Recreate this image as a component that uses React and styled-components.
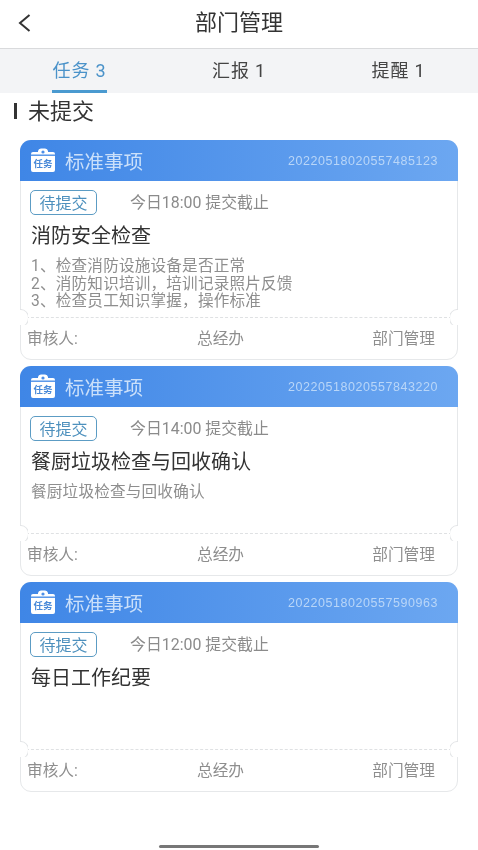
import styled, { createGlobalStyle } from 'styled-components';

const GlobalStyle = createGlobalStyle`
    html, body {
        margin: 0;
        padding: 0;
        background: #fff;
    }
    * {
        box-sizing: border-box;
    }
`;

const Page = styled.main`
    width: 478px;
    height: 850px;
    overflow: hidden;
    position: relative;
    font-family: Roboto, 'Noto Sans CJK SC', sans-serif;
    color: #2e2e2e;
    background: #fff;
    filter: blur(0.5px);
`;

const NavBar = styled.header`
    height: 49px;
    display: flex;
    align-items: center;
    justify-content: center;
    position: relative;
    border-bottom: 1px solid #d9dadc;
`;

const BackButton = styled.button`
    position: absolute;
    left: 14px;
    top: 10px;
    width: 18px;
    height: 26px;
    padding: 0;
    border: none;
    background: none;
    color: #333;
`;

const NavTitle = styled.h1`
    margin: 0 0 3px;
    font-size: 22px;
    font-weight: 400;
    line-height: 44px;
    color: #333;
`;

const Tabs = styled.nav`
    height: 44px;
    display: grid;
    grid-template-columns: 159px 160px 159px;
    background: #f3f4f6;
`;

const Tab = styled.div`
    position: relative;
    text-align: center;
    font-size: 18px;
    line-height: 44px;
    letter-spacing: 0.8px;
    color: ${props => (props.$active ? '#4a92c9' : '#444')};

    ${props => props.$active && `
        &::after {
            content: '';
            position: absolute;
            left: 52px;
            bottom: 0;
            width: 55px;
            height: 3px;
            background: #4a9ad0;
        }
    `}
`;

const SectionTitle = styled.h2`
    height: 40px;
    margin: 0 0 7px;
    padding: 0 0 8px 14px;
    display: flex;
    align-items: center;
    gap: 11px;
    font-size: 22px;
    font-weight: 400;
    color: #333;

    &::before {
        content: '';
        width: 3px;
        height: 16px;
        margin-top: 3px;
        background: #333;
    }
`;

const CardList = styled.section`
    display: flex;
    flex-direction: column;
    gap: 6px;
    padding: 0 20px;
`;

const Card = styled.article`
    height: ${props => props.$height}px;
    display: flex;
    flex-direction: column;
    position: relative;
    border: 1px solid #e6e8ea;
    border-radius: 11px;
    background: #fff;
`;

const CardHead = styled.div`
    height: 41px;
    margin: -1px -1px 0;
    padding: 0 20px 0 10px;
    display: flex;
    align-items: center;
    border-radius: 11px 11px 0 0;
    background: linear-gradient(90deg, #3f86e6, #6ca7f1);
`;

const HeadTitle = styled.span`
    margin-left: 9px;
    font-size: 19.5px;
    color: #cbe0fa;
`;

const HeadNumber = styled.span`
    margin-left: auto;
    font-family: 'Liberation Sans', sans-serif;
    font-size: 12.5px;
    letter-spacing: 0.55px;
    color: #b9d6f8;
`;

const CardBody = styled.div`
    flex: 1;
    padding: 9px 10px 0 9px;
`;

const StatusRow = styled.div`
    display: flex;
    align-items: center;
    height: 25px;
`;

const StatusBadge = styled.span`
    width: 67px;
    height: 25px;
    padding-bottom: 2px;
    display: flex;
    align-items: center;
    justify-content: center;
    border: 1.5px solid #5c9cc4;
    border-radius: 5px;
    font-size: 16px;
    color: #4d90bd;
`;

const Deadline = styled.span`
    margin: 0 0 3px 33px;
    font-size: 15.9px;
    color: #8b8b8b;
`;

const TaskTitle = styled.h3`
    margin: 8px 0 0 1px;
    font-size: 20px;
    font-weight: 400;
    line-height: 26px;
    color: #333;
`;

const TaskDesc = styled.p`
    margin: 9px 0 0 1px;
    font-size: 15.6px;
    line-height: 17.5px;
    letter-spacing: 0.2px;
    color: #8e8e8e;
    white-space: pre-line;
`;

const CardFoot = styled.div`
    height: 42px;
    padding: 0 22px 2px 6px;
    display: grid;
    grid-template-columns: 170px 1fr auto;
    align-items: center;
    position: relative;
    border-top: 1px dashed #dfe1e3;
    font-size: 15.7px;
    color: #8e8e8e;
`;

const Notch = styled.i`
    position: absolute;
    top: -9px;
    ${props => props.$side}: -1px;
    width: 8px;
    height: 16px;
    overflow: hidden;
    background: #fff;

    &::before {
        content: '';
        position: absolute;
        top: 0;
        ${props => props.$side}: -7px;
        width: 14px;
        height: 16px;
        border-radius: 50%;
        border: 1px solid #e3e5e7;
    }
`;

const HomeBar = styled.div`
    position: absolute;
    left: 159px;
    bottom: 2px;
    width: 160px;
    height: 3px;
    border-radius: 2px;
    background: #777;
`;

const tasks = [
    {
        number: '20220518020557485123',
        time: '今日18:00 提交截止',
        title: '消防安全检查',
        desc: '1、检查消防设施设备是否正常\n2、消防知识培训，培训记录照片反馈\n3、检查员工知识掌握，操作标准',
        height: 220,
    },
    {
        number: '20220518020557843220',
        time: '今日14:00 提交截止',
        title: '餐厨垃圾检查与回收确认',
        desc: '餐厨垃圾检查与回收确认',
        height: 210,
    },
    {
        number: '20220518020557590963',
        time: '今日12:00 提交截止',
        title: '每日工作纪要',
        desc: '',
        height: 210,
    },
];

function TaskIcon() {
    return (
        <svg width="26" height="25" viewBox="0 0 26 25">
            <path d="M3 4h5V3a3 3 0 0 1 3-2.5h4A3 3 0 0 1 18 3v1h5a2 2 0 0 1 2 2v16a2 2 0 0 1-2 2H3a2 2 0 0 1-2-2V6a2 2 0 0 1 2-2z" fill="#fff" />
            <rect x="1" y="6.5" width="24" height="1.4" fill="#4c8fe8" />
            <circle cx="13" cy="4" r="1.6" fill="#4c8fe8" />
            <text x="13" y="19" textAnchor="middle" fontSize="9.5" fontWeight="700" fill="#4a8ad8" fontFamily="'Noto Sans CJK SC', sans-serif">任务</text>
        </svg>
    );
}

function TaskCard({ task }) {
    return (
        <Card $height={task.height}>
            <CardHead>
                <TaskIcon />
                <HeadTitle>标准事项</HeadTitle>
                <HeadNumber>{task.number}</HeadNumber>
            </CardHead>
            <CardBody>
                <StatusRow>
                    <StatusBadge>待提交</StatusBadge>
                    <Deadline>{task.time}</Deadline>
                </StatusRow>
                <TaskTitle>{task.title}</TaskTitle>
                {task.desc && <TaskDesc>{task.desc}</TaskDesc>}
            </CardBody>
            <CardFoot>
                <Notch $side="left" />
                <span>审核人:</span>
                <span>总经办</span>
                <span>部门管理</span>
                <Notch $side="right" />
            </CardFoot>
        </Card>
    );
}

export default function App() {
    return (
        <Page>
            <GlobalStyle />
            <NavBar>
                <BackButton aria-label="返回">
                    <svg width="18" height="26" viewBox="0 0 18 26" fill="none">
                        <path d="M15.5 5L6 13L15.5 21" stroke="currentColor" strokeWidth="2" />
                    </svg>
                </BackButton>
                <NavTitle>部门管理</NavTitle>
            </NavBar>
            <Tabs>
                <Tab $active>任务 3</Tab>
                <Tab>汇报 1</Tab>
                <Tab>提醒 1</Tab>
            </Tabs>
            <SectionTitle>未提交</SectionTitle>
            <CardList>
                {tasks.map(task => <TaskCard key={task.number} task={task} />)}
            </CardList>
            <HomeBar />
        </Page>
    );
}
